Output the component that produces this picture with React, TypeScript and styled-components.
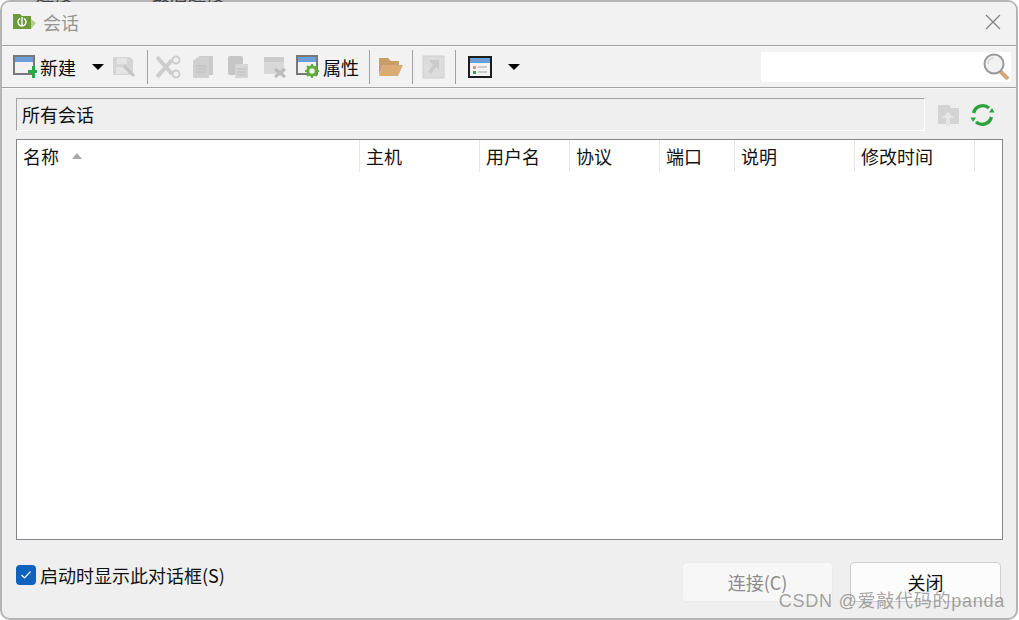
import styled, { createGlobalStyle } from "styled-components"

const GlobalStyle = createGlobalStyle`
  html, body {
    margin: 0;
    padding: 0;
    background: #fff;
  }
  body {
    font-family: "Noto Sans CJK SC", "Liberation Sans", sans-serif;
  }
`

const Page = styled.div`
  position: relative;
  width: 1019px;
  height: 620px;
  overflow: hidden;
  background: #fff;
`

const BehindStrip = styled.div`
  position: absolute;
  z-index: 2;
  top: 0;
  left: 36px;
  height: 2px;
  width: 200px;
  overflow: hidden;
  display: flex;
  gap: 80px;
  color: #444;
  font-size: 18px;
  line-height: 18px;

  span {
    display: block;
    margin-top: -16px;
  }
`

const Window = styled.div`
  width: 1018px;
  height: 620px;
  box-sizing: border-box;
  border: 2px solid #b4b4b4;
  border-radius: 10px;
  background: #efefef;
  display: flex;
  flex-direction: column;
  overflow: hidden;
`

const TitleBar = styled.div`
  height: 44px;
  flex: none;
  box-sizing: border-box;
  display: flex;
  align-items: center;
  padding: 0 14px 4px 11px;
  background: #f2f2f2;
  border-bottom: 1px solid #a2a2a2;
`

const TitleText = styled.span`
  margin-left: 6px;
  font-size: 18px;
  line-height: 24px;
  color: #959595;
`

const CloseButton = styled.button`
  margin-left: auto;
  width: 18px;
  height: 18px;
  padding: 0;
  border: 0;
  background: none;
  display: flex;
`

const Toolbar = styled.div`
  height: 42px;
  flex: none;
  box-sizing: border-box;
  display: flex;
  align-items: center;
  padding: 0 5px 0 11px;
  background: #f2f2f2;
  border-top: 1px solid #fafafa;
  border-bottom: 1px solid #a2a2a2;
  box-shadow: 0 1px 0 #f8f8f8;
`

const ToolIcon = styled.svg<{ $ml?: number; $disabled?: boolean }>`
  flex: none;
  display: block;
  margin-left: ${(p) => p.$ml ?? 0}px;
  filter: ${(p) => (p.$disabled ? "blur(0.6px)" : "none")};
`

const ToolLabel = styled.span<{ $ml: number }>`
  margin-left: ${(p) => p.$ml}px;
  font-size: 18px;
  line-height: 24px;
  color: #0c0c0c;
`

const ToolSep = styled.div<{ $ml: number }>`
  flex: none;
  width: 1px;
  height: 34px;
  margin-left: ${(p) => p.$ml}px;
  background: #a0a0a0;
`

const Caret = styled.div<{ $ml: number }>`
  flex: none;
  width: 0;
  height: 0;
  margin-left: ${(p) => p.$ml}px;
  border-left: 6px solid transparent;
  border-right: 6px solid transparent;
  border-top: 6px solid #000;
`

const SearchBox = styled.div`
  margin-left: auto;
  width: 250px;
  height: 30px;
  background: #fff;
  display: flex;
  align-items: center;
  justify-content: flex-end;
  padding-right: 1px;
  box-sizing: border-box;
`

const Content = styled.div`
  flex: 1;
  min-height: 0;
  display: flex;
  flex-direction: column;
  padding: 10px 14px 0;
`

const PathRow = styled.div`
  display: flex;
  align-items: center;
  height: 33px;
  flex: none;
`

const PathField = styled.div`
  width: 909px;
  height: 33px;
  box-sizing: border-box;
  border: 1px solid;
  border-color: #a2a2a2 #fff #fff #a2a2a2;
  background: #efefef;
  padding-left: 5px;
  font-size: 18px;
  line-height: 30px;
  color: #111;
`

const Table = styled.div`
  margin-top: 8px;
  width: 987px;
  height: 401px;
  box-sizing: border-box;
  border: 1px solid #85858c;
  background: #fff;
  flex: none;
`

const HeaderRow = styled.div`
  display: flex;
  height: 32px;
`

const HeaderCell = styled.div<{ $w: number }>`
  width: ${(p) => p.$w}px;
  flex: none;
  box-sizing: border-box;
  padding-left: 6px;
  border-right: 1px solid #e6e6e6;
  font-size: 18px;
  line-height: 32px;
  color: #111;
  display: flex;
  align-items: center;
`

const SortMark = styled.span`
  margin-left: 13px;
  margin-top: -1px;
  width: 0;
  height: 0;
  border-left: 5.5px solid transparent;
  border-right: 5.5px solid transparent;
  border-bottom: 6px solid #a8a8a8;
`

const Footer = styled.div`
  flex: 1;
  display: flex;
  align-items: flex-start;
`

const CheckRow = styled.label`
  display: flex;
  align-items: center;
  gap: 4px;
  margin-top: 23px;
  font-size: 18px;
  line-height: 24px;
  color: #111;
`

const CheckBox = styled.span`
  width: 20px;
  height: 20px;
  border-radius: 4px;
  background: #0f62bd;
  display: flex;
  align-items: center;
  justify-content: center;
`

const Buttons = styled.div`
  margin-left: auto;
  margin-right: 1px;
  margin-top: 22px;
  display: flex;
  gap: 17px;
`

const DialogButton = styled.button<{ $disabled?: boolean }>`
  width: 151px;
  height: 40px;
  box-sizing: border-box;
  padding: 0;
  border-radius: 4px;
  border: 1px solid ${(p) => (p.$disabled ? "#ebebeb" : "#cfcfcf")};
  background: ${(p) => (p.$disabled ? "#f7f7f7" : "#fcfcfc")};
  color: ${(p) => (p.$disabled ? "#8c8c8c" : "#111")};
  font-family: inherit;
  font-size: 18px;
  line-height: 38px;
`

const Watermark = styled.div`
  position: absolute;
  z-index: 3;
  right: 14px;
  bottom: 7px;
  font-family: "Liberation Sans", "Noto Sans CJK SC", sans-serif;
  font-size: 18px;
  line-height: 24px;
  letter-spacing: 0.75px;
  color: rgba(120, 120, 120, 0.68);
`

const columns = [
  { name: "主机", w: 120 },
  { name: "用户名", w: 90 },
  { name: "协议", w: 90 },
  { name: "端口", w: 75 },
  { name: "说明", w: 120 },
  { name: "修改时间", w: 120 },
]

function NewIcon() {
  return (
    <ToolIcon width="24" height="24" viewBox="0 0 24 24">
      <rect x="1" y="1" width="20" height="18" fill="#f1f1f1" stroke="#787878" strokeWidth="2" />
      <rect x="2" y="2" width="18" height="5" fill="#6b9fdc" />
      <path d="M15 15h4v-4h3v4h2v3h-2v5h-3v-5h-4z" fill="#29a744" />
    </ToolIcon>
  )
}

function SaveIcon() {
  return (
    <ToolIcon $ml={8} $disabled width="24" height="24" viewBox="0 0 24 24">
      <path d="M1 2h17l3 3v15H1z" fill="#d5d5d5" />
      <rect x="5" y="3" width="10" height="6" fill="#e4e4e4" />
      <rect x="4" y="12" width="12" height="7" fill="#e4e4e4" />
      <path d="M12 11l10 10" stroke="#c4c4c4" strokeWidth="3" />
    </ToolIcon>
  )
}

function CutIcon() {
  return (
    <ToolIcon $ml={8} $disabled width="25" height="24" viewBox="0 0 25 24" fill="none">
      <path d="M1 2l15 17M1 22L16 5" stroke="#cdcdcd" strokeWidth="4" />
      <circle cx="20" cy="5" r="3.5" stroke="#cdcdcd" strokeWidth="2" />
      <circle cx="20" cy="19" r="3.5" stroke="#cdcdcd" strokeWidth="2" />
    </ToolIcon>
  )
}

function CopyIcon({ ml }: { ml: number }) {
  return (
    <ToolIcon $ml={ml} $disabled width="22" height="24" viewBox="0 0 22 24">
      <path d="M7 1h14v19H7z" fill="#cbcbcb" />
      <path d="M1 6l5-4h11v21H1z" fill="#d0d0d0" />
      <path d="M4 11h10M4 14h10M4 17h10" stroke="#bcbcbc" />
    </ToolIcon>
  )
}

function PasteIcon() {
  return (
    <ToolIcon $ml={13} $disabled width="22" height="24" viewBox="0 0 22 24">
      <rect x="1" y="1" width="15" height="19" rx="2" fill="#c6c6c6" />
      <path d="M8 9h13v14H8z" fill="#d6d6d6" />
      <path d="M10 14h9M10 17h9M10 20h9" stroke="#bebebe" />
    </ToolIcon>
  )
}

function DeleteIcon() {
  return (
    <ToolIcon $ml={14} $disabled width="24" height="24" viewBox="0 0 24 24">
      <rect x="1" y="2" width="20" height="17" fill="#d8d8d8" />
      <rect x="1" y="2" width="20" height="5" fill="#cbcbcb" />
      <path d="M12 14l10 8M22 14l-10 8" stroke="#bcbcbc" strokeWidth="3" />
    </ToolIcon>
  )
}

function PropsIcon() {
  return (
    <ToolIcon $ml={9} width="24" height="24" viewBox="0 0 24 24">
      <rect x="1" y="1" width="20" height="18" fill="#f1f1f1" stroke="#787878" strokeWidth="2" />
      <rect x="2" y="2" width="18" height="5" fill="#6b9fdc" />
      <circle cx="16" cy="16" r="4.2" fill="#f2f2f2" stroke="#5fae3c" strokeWidth="3" />
      <path d="M16 9v3M16 20v3M9 16h3M20 16h3M11 11l2 2M19 19l2 2M21 11l-2 2M13 19l-2 2" stroke="#5fae3c" strokeWidth="2" />
    </ToolIcon>
  )
}

function FolderIcon() {
  return (
    <ToolIcon $ml={8} $disabled width="25" height="24" viewBox="0 0 25 24">
      <path d="M1 3h9l3 3h8v4H5L1 20z" fill="#c79f66" />
      <path d="M5 10h20l-5 11H1z" fill="#d8ac72" />
    </ToolIcon>
  )
}

function ShortcutIcon() {
  return (
    <ToolIcon $ml={9} $disabled width="23" height="24" viewBox="0 0 23 24">
      <rect x="1" y="1" width="21" height="22" fill="#dcdcdc" stroke="#d0d0d0" />
      <path d="M7 5h10v10l-3-3-5 7-3-2 5-7z" fill="#cacaca" />
    </ToolIcon>
  )
}

function ViewIcon() {
  return (
    <ToolIcon $ml={12} width="24" height="22" viewBox="0 0 24 22">
      <rect x="1" y="1" width="22" height="20" fill="#f4f4f4" stroke="#1c1c1c" strokeWidth="2" />
      <rect x="2" y="2" width="20" height="5" fill="#6b9fdc" />
      <rect x="5" y="10" width="3" height="3" fill="#ef8a8a" />
      <rect x="5" y="15" width="3" height="3" fill="#2fa84f" />
      <path d="M10 11h9M10 16h9" stroke="#bdbdbd" strokeWidth="1.5" />
    </ToolIcon>
  )
}

function SearchIcon() {
  return (
    <svg width="27" height="28" viewBox="0 0 27 28">
      <path d="M17 18l8 8" stroke="#d6a878" strokeWidth="4" />
      <circle cx="11" cy="11" r="9.5" fill="#f2f2f2" stroke="#9a9a9a" strokeWidth="2" />
      <path d="M5 11a6 6 0 0 1 6-6" fill="none" stroke="#dcdcdc" strokeWidth="2" />
    </svg>
  )
}

function UpFolderIcon() {
  return (
    <ToolIcon $ml={12} $disabled width="23" height="24" viewBox="0 0 23 24">
      <path d="M1 2h11l2 3h8v16H1z" fill="#d3d3d3" />
      <path d="M11 9l6 6h-4v8H9v-8H5z" fill="#e6e6e6" />
    </ToolIcon>
  )
}

function RefreshIcon() {
  return (
    <ToolIcon $ml={10} width="25" height="24" viewBox="0 0 25 24" fill="none">
      <path d="M3.6 10A9.5 9.5 0 0 1 19 5" stroke="#2ca23c" strokeWidth="3.4" />
      <path d="M21.4 14A9.5 9.5 0 0 1 6 19" stroke="#2ca23c" strokeWidth="3.4" />
      <path d="M19 9.5h5.5L22 5zM6 14.5H.5L3 19z" fill="#2ca23c" />
    </ToolIcon>
  )
}

export default function App() {
  return (
    <Page>
      <GlobalStyle />
      <BehindStrip>
        <span>连接</span>
        <span>最后连接</span>
      </BehindStrip>
      <Window>
        <TitleBar>
          <svg width="24" height="18" viewBox="0 0 24 18">
            <path d="M0 1h7l2 2h9v13H0z" fill="#6c9a38" />
            <path d="M18 6l5 4-5 6z" fill="#b5cd90" />
            <path d="M7 5.5a4 4 0 1 0 4 0" fill="none" stroke="#fff" strokeWidth="1.4" />
            <path d="M9 4v9" stroke="#fff" strokeWidth="1.4" />
          </svg>
          <TitleText>会话</TitleText>
          <CloseButton aria-label="关闭">
            <svg width="18" height="18" viewBox="0 0 18 18" fill="none">
              <path d="M2 2l14 14M16 2L2 16" stroke="#7e7e7e" strokeWidth="1.2" />
            </svg>
          </CloseButton>
        </TitleBar>
        <Toolbar>
          <NewIcon />
          <ToolLabel $ml={3}>新建</ToolLabel>
          <Caret $ml={16} />
          <SaveIcon />
          <ToolSep $ml={11} />
          <CutIcon />
          <CopyIcon ml={11} />
          <PasteIcon />
          <DeleteIcon />
          <PropsIcon />
          <ToolLabel $ml={3}>属性</ToolLabel>
          <ToolSep $ml={10} />
          <FolderIcon />
          <ToolSep $ml={9} />
          <ShortcutIcon />
          <ToolSep $ml={10} />
          <ViewIcon />
          <Caret $ml={16} />
          <SearchBox>
            <SearchIcon />
          </SearchBox>
        </Toolbar>
        <Content>
          <PathRow>
            <PathField>所有会话</PathField>
            <UpFolderIcon />
            <RefreshIcon />
          </PathRow>
          <Table>
            <HeaderRow>
              <HeaderCell $w={343}>
                名称
                <SortMark />
              </HeaderCell>
              {columns.map((c) => (
                <HeaderCell key={c.name} $w={c.w}>
                  {c.name}
                </HeaderCell>
              ))}
            </HeaderRow>
          </Table>
          <Footer>
            <CheckRow>
              <CheckBox>
                <svg width="12" height="10" viewBox="0 0 12 10" fill="none">
                  <path d="M1.5 5l3 3 6-6.5" stroke="#fff" strokeWidth="1.2" />
                </svg>
              </CheckBox>
              启动时显示此对话框(S)
            </CheckRow>
            <Buttons>
              <DialogButton $disabled>连接(C)</DialogButton>
              <DialogButton>关闭</DialogButton>
            </Buttons>
          </Footer>
        </Content>
      </Window>
      <Watermark>CSDN @爱敲代码的panda</Watermark>
    </Page>
  )
}
